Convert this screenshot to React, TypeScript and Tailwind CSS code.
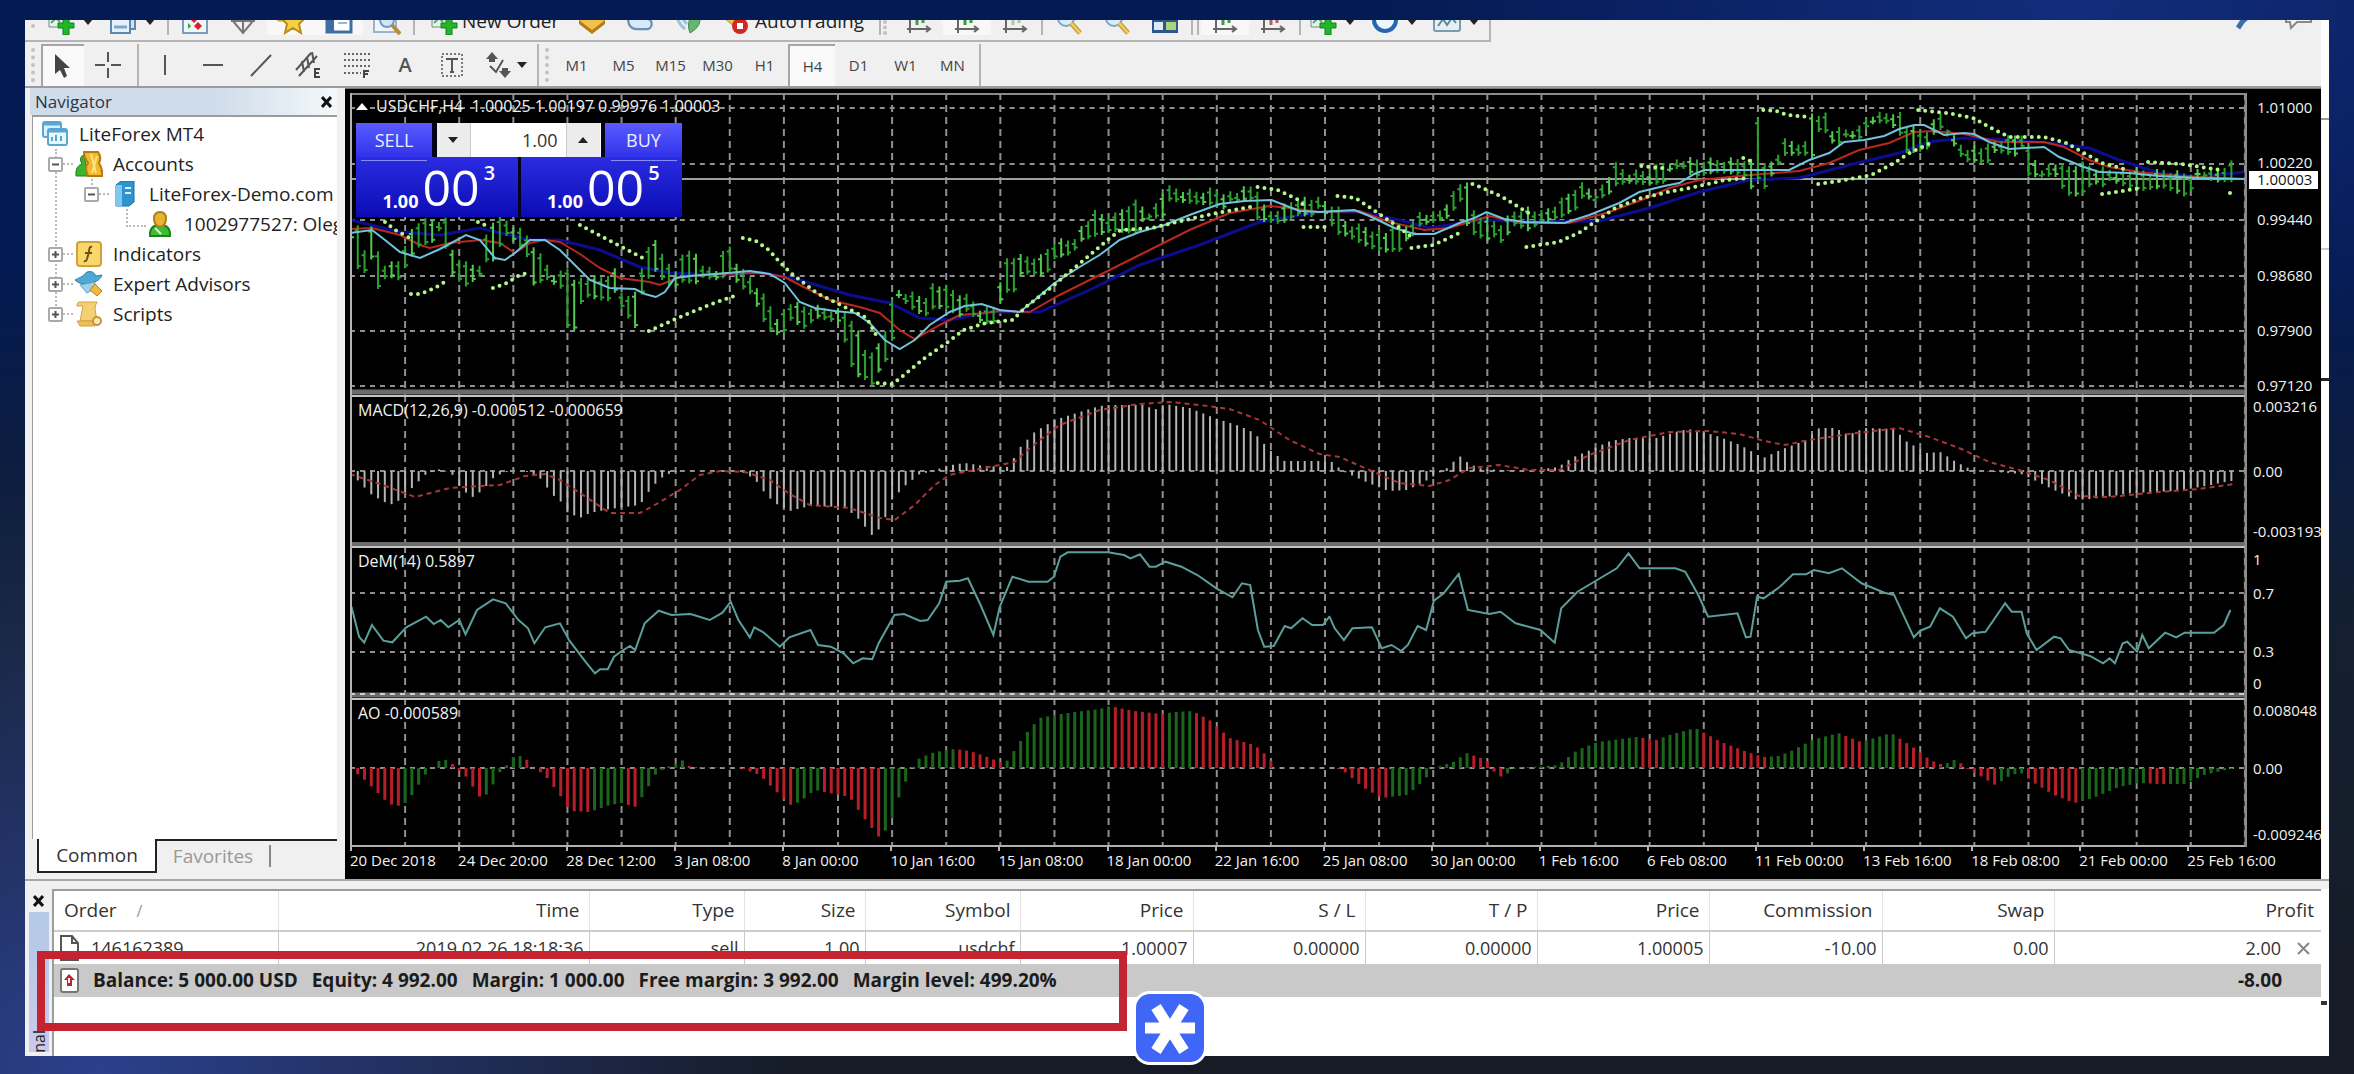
import React from 'react'
import { Cloud } from 'lucide-react'

const STEP = 54.14 / 8
const START = 351
const BARS = 279

// linear interpolation over a sorted list of points
function at(points: number[][], x: number, col = 1) {
    for (let i = 1; i < points.length; i++) {
        if (x <= points[i][0]) {
            const a = points[i - 1]
            const b = points[i]
            const t = (x - a[0]) / (b[0] - a[0] || 1)
            return a[col] + (b[col] - a[col]) * t
        }
    }
    return points[points.length - 1][col]
}

const pairs = (text: string) => text.trim().split(/\s+/).map((p) => p.split(',').map(Number))
const line = (text: string) => 'M' + text.trim().split(/\s+/).join(' L')

// x, high, low
const price = pairs(`
350,217,240 357,223,272 364,250,277 372,227,260 379,255,295 386,265,277 400,260,280 407,237,262 418,222,245 440,220,235
446,220,253 453,252,280 466,263,288 479,265,278 487,233,260 494,220,260 505,220,232 520,230,243 529,237,267 535,247,295
544,260,280 557,277,288 562,270,290 568,267,331 574,283,331 583,277,295 600,278,297 615,270,297 622,293,313 636,293,331
643,263,290 654,238,270 663,253,280 674,277,287 682,252,280 696,253,280 706,267,283 717,270,283 724,252,280 730,247,273
739,267,287 750,277,293 758,287,307 767,300,327 778,317,332 791,303,325 804,307,332 817,307,320 839,310,323 847,313,347
854,320,373 867,353,377 875,357,385 882,333,370 890,325,360 894,287,333 899,290,300 912,293,310 925,297,317 934,283,307
947,288,307 969,297,317 982,310,327 997,305,325 1002,270,295 1006,260,293 1014,257,292 1022,257,272 1041,257,273
1056,240,263 1072,240,257 1082,227,243 1095,213,237 1113,217,230 1134,200,230 1152,212,222 1163,193,220 1169,188,203
1195,192,203 1212,189,203 1234,193,207 1251,187,203 1258,190,222 1267,213,223 1282,207,223 1299,197,213 1321,200,213
1338,207,237 1347,223,238 1369,227,247 1384,233,250 1403,223,247 1412,227,243 1418,212,230 1438,213,223 1451,197,217
1460,183,197 1467,183,223 1475,213,233 1490,220,238 1502,223,247 1516,210,227 1527,207,233 1542,213,223 1559,203,217
1581,183,203 1598,193,203 1609,177,197 1616,165,187 1629,173,183 1650,170,183 1663,163,180 1682,160,170 1695,160,180
1718,160,172 1744,158,173 1751,160,183 1754,160,190 1758,109,184 1762,160,190 1766,167,193 1775,160,173 1786,140,157
1806,143,155 1812,113,160 1819,113,130 1826,113,130 1833,130,140 1850,130,142 1864,127,143 1868,115,127 1886,113,123
1899,110,130 1908,127,152 1926,133,147 1941,113,133 1948,127,137 1957,140,152 1965,147,163 1988,147,163 1996,142,150
2023,133,153 2029,147,180 2041,168,180 2056,163,177 2067,168,195 2081,163,195 2094,167,180 2116,170,187 2140,170,193
2151,173,190 2165,170,187 2185,173,193 2200,170,180 2216,172,185 2231,163,183`)

const fastMa = `350,233 372,230 385,240 400,252 420,258 440,249 466,235 480,240 495,258 505,260 515,253 530,240 545,240 560,250
575,265 590,280 610,288 635,289 645,294 656,297 665,292 675,278 690,276 715,274 750,271 770,274 785,283 800,302 815,308
835,311 855,313 870,323 885,340 900,349 915,340 930,325 950,312 965,306 982,304 1000,310 1020,312 1035,300 1055,283
1080,267 1100,255 1120,240 1140,232 1165,225 1190,215 1220,204 1245,201 1272,200 1300,211 1320,212 1355,210 1370,216
1395,228 1415,234 1435,234 1460,223 1475,218 1487,212 1505,219 1525,222 1565,223 1590,215 1620,203 1640,192 1665,186
1680,183 1695,174 1705,170 1790,170 1810,160 1830,153 1845,142 1865,140 1885,136 1900,129 1915,125 1925,125 1945,135
1965,133 1975,134 1990,142 2010,149 2045,147 2060,157 2085,167 2100,172 2130,173 2160,176 2200,178 2245,179`
const midMa = `350,229 372,228 400,235 420,245 430,248 450,243 480,240 500,243 515,253 530,243 545,240 560,242 580,254 600,268
620,278 650,282 660,285 680,277 720,274 760,273 785,277 800,285 830,300 860,307 880,313 900,330 915,339 940,325 960,315
985,313 1000,311 1030,312 1060,295 1100,275 1140,255 1190,230 1230,213 1270,206 1290,208 1320,212 1360,211 1390,222
1425,230 1450,228 1490,216 1520,223 1570,223 1610,212 1650,197 1670,188 1700,180 1740,176 1800,171 1830,163 1860,150
1890,143 1915,132 1935,131 1965,134 2000,142 2045,142 2065,147 2090,160 2110,167 2140,172 2180,176 2245,179`
const slowMa = `350,220 400,232 440,235 480,228 530,240 560,240 600,250 640,267 670,273 720,275 760,272 800,280 850,295
890,303 920,318 950,320 990,312 1040,312 1090,290 1140,265 1200,245 1260,222 1320,212 1360,212 1400,220 1430,228
1480,220 1540,222 1600,221 1650,208 1700,192 1750,180 1800,178 1850,165 1900,153 1930,142 1965,138 2010,140 2050,143
2090,148 2120,160 2160,173 2200,177 2245,172`

const sar = [
    '385,222 395,230 410,238',
    '411,294 420,294 435,288 448,280',
    '478,222 487,226',
    '493,288 505,284 520,275 528,273',
    '580,225 643,258',
    '649,331 678,318 709,305 737,295',
    '743,238 756,241 769,250 778,260 791,273 817,293 847,308 867,318 878,338',
    '878,383 893,384 908,372 925,358 947,343 964,330 986,323 1013,320 1026,307 1052,287 1082,262 1108,240 1121,230 1152,228 1186,220 1217,213 1251,207',
    '1258,187 1278,190 1299,200 1306,207',
    '1304,227 1332,227',
    '1338,196 1356,198 1377,212 1399,227 1412,237',
    '1412,248 1434,245 1460,233',
    '1473,184 1481,187 1503,197 1529,213',
    '1527,247 1559,242 1581,232 1594,223 1616,208 1642,198 1669,192 1695,187 1726,180 1749,178',
    '1642,166 1663,168',
    '1744,158 1753,162',
    '1764,110 1777,111 1788,115 1811,117',
    '1819,184 1846,180 1872,175 1895,163 1912,152 1934,142',
    '1919,110 1948,113 1974,118 1992,128 2010,137 2045,137 2067,143 2085,153 2103,163 2129,170',
    '2103,194 2143,188',
    '2149,162 2182,164 2222,170',
    '2231,193 2232,193',
]

const macd = pairs(`350,472 362,485 372,495 390,505 400,500 412,488 425,475 440,469 452,474 462,490 473,497 483,490 495,476
510,471 525,471 540,478 553,495 565,505 567,512 580,518 590,513 610,509 640,505 652,487 665,475 680,471 740,471 755,479
765,493 775,503 790,511 810,506 845,507 860,520 872,535 882,527 892,500 905,486 920,474 935,471 945,466 965,463 985,466
1010,467 1018,450 1035,432 1055,420 1080,412 1100,406 1110,405 1145,405 1155,410 1165,404 1190,408 1215,418 1240,426
1255,433 1270,450 1285,461 1320,461 1333,462 1343,471 1356,477 1369,483 1389,491 1408,490 1428,480 1441,472 1451,466
1459,455 1470,464 1483,469 1526,471 1559,467 1572,458 1591,450 1611,441 1630,438 1657,438 1676,432 1689,429 1715,435
1741,445 1764,458 1781,450 1807,440 1820,428 1836,428 1849,435 1866,428 1895,429 1908,442 1928,453 1941,452 1957,462
1973,470 2022,474 2035,480 2055,490 2078,500 2101,498 2133,493 2179,491 2212,485 2231,481`)
const macdSignal = `350,474 380,484 415,497 450,488 480,486 500,485 525,476 545,474 560,480 580,493 610,513 640,513 655,505
680,490 700,475 720,471 745,472 770,480 790,494 810,505 850,508 880,518 895,520 915,505 935,485 950,475 975,470 1000,465
1015,462 1030,448 1060,425 1100,410 1140,404 1170,402 1200,405 1230,409 1260,420 1290,440 1320,454 1340,457 1370,470
1400,483 1430,486 1450,480 1470,468 1500,465 1530,470 1560,470 1590,455 1630,440 1670,432 1710,431 1740,434 1765,441
1785,445 1810,440 1850,434 1900,428 1930,437 1960,448 1990,462 2020,470 2050,480 2080,496 2110,497 2160,492 2200,489 2235,484`

const toPath = (text: string, x0: number, sx: number) =>
    pairs(text).map(([x, y]) => `${(x0 + x / sx).toFixed(1)},${(390 + y / 3).toFixed(1)}`).join(' ')

const dem =
    toPath(`18,650 30,740 38,758 50,705 68,752 82,757 104,712 135,680 147,702 158,690 170,712 187,690 197,733 215,660 240,628
260,640 280,690 295,715 305,760 322,712 345,700 360,752 385,815 400,850 408,838 420,838 430,800 442,783 455,768 463,780
478,700 500,662 520,675 550,672 580,690 600,668 613,635 625,690 643,742 650,712 665,728 690,770 705,742 738,720 750,765
770,770 790,790 805,820 820,805 835,808 845,760 870,675 885,672 910,693 922,690 940,640 951,575 972,572 985,565 1005,645
1025,735 1035,650 1055,560 1080,575 1110,575 1120,560 1130,500 1142,487 1205,487 1230,495 1240,505 1255,493 1270,530
1280,530 1295,515 1320,530 1345,555 1375,595 1400,622 1415,580 1428,585 1440,720 1450,770 1465,768 1482,708 1492,715
1510,685 1525,705 1542,705 1552,680`, 340, 1.568) + ' ' +
    toPath(`0,680 8,715 22,750 35,715 65,712 80,775 95,765 110,783 120,765 135,708 148,720 160,632 175,610 198,552 212,660
245,672 262,665 285,700 323,720 345,758 355,655 380,605 410,570 440,535 458,490 475,535 530,535 545,545 565,615 580,680
625,670 638,742 645,740 655,620 665,625 690,590 710,553 730,553 742,540 765,550 785,535 815,580 850,608 865,615 895,742
905,722 920,710 935,655 955,680 975,745 985,730 1005,725 1035,640 1045,665 1060,665 1068,730 1083,780 1110,740 1120,745
1133,780 1165,798 1185,820 1195,805 1203,820 1215,760 1222,755 1237,785 1245,735 1255,775 1280,728 1297,742 1310,728
1355,728 1370,705 1380,660`, 1330, 1.531)

const ao = pairs(`350,768 365,780 385,800 395,807 405,803 412,795 425,775 432,768 440,760 450,760 455,768 465,775 475,790
482,800 490,790 500,772 508,764 515,755 525,757 532,767 545,775 560,795 570,811 590,812 610,805 622,803 635,807 645,793
655,775 665,768 680,762 685,759 690,767 740,768 760,775 775,790 790,805 800,802 815,790 840,795 850,797 862,815 880,838
890,825 900,795 912,768 920,758 935,752 955,749 970,751 985,756 1000,762 1005,764 1015,750 1025,735 1040,718 1055,715
1075,712 1100,709 1110,706 1135,711 1162,714 1175,712 1193,711 1210,720 1230,738 1255,745 1270,758 1275,768 1335,768
1343,770 1363,787 1382,798 1408,795 1425,780 1434,768 1454,762 1467,753 1487,760 1497,775 1503,777 1516,768 1559,765
1578,750 1598,742 1637,737 1657,740 1670,735 1696,728 1722,742 1748,752 1764,757 1780,756 1794,750 1813,740 1839,733
1862,742 1892,733 1918,750 1931,760 1944,765 1957,759 1967,768 1983,777 1996,785 2012,775 2022,773 2035,783 2055,795
2075,803 2094,798 2120,787 2140,783 2160,784 2186,784 2205,775 2231,769`)

const xs = Array.from({ length: BARS }, (_, i) => START + i * STEP)

function Plot({ top, height, rows, children }: { top: number; height: number; rows: number[]; children: React.ReactNode }) {
    return (
        <svg className="block h-full w-full" viewBox={`350 ${top} 1898 ${height}`} preserveAspectRatio="none" aria-hidden="true">
            {Array.from({ length: 35 }, (_, i) => (
                <line key={i} x1={START + (i + 1) * 54.14} x2={START + (i + 1) * 54.14} y1={top} y2={top + height} stroke="#8f8f8f" strokeWidth="2" strokeDasharray="7 5" />
            ))}
            {rows.map((y) => (
                <line key={y} x1="350" x2="2248" y1={y} y2={y} stroke="#8f8f8f" strokeWidth="2" strokeDasharray="5 5" />
            ))}
            {children}
            <path d={`M351 ${top} V${top + height}`} stroke="#b5b5b5" strokeWidth="2" />
            <path d={`M2247 ${top} V${top + height}`} stroke="#8c8c8c" strokeWidth="3" />
        </svg>
    )
}

function Axis({ top, height, labels, current }: { top: number; height: number; labels: [string, number][]; current?: [string, number] }) {
    return (
        <svg className="block shrink-0" width="74" height={height} viewBox={`2248 ${top} 74 ${height}`} fontFamily="Open Sans, Noto Sans, sans-serif" fontSize="15" fill="#f2f2f2">
            {labels.map(([label, y]) => (
                <text key={label} x={current ? 2258 : 2254} y={y + 5}>{label}</text>
            ))}
            {current && (
                <>
                    <rect x="2250" y={current[1] - 8} width="69" height="18" fill="#fff" />
                    <text x="2258" y={current[1] + 6} fill="#111">{current[0]}</text>
                </>
            )}
        </svg>
    )
}

const dates = [
    '20 Dec 2018', '24 Dec 20:00', '28 Dec 12:00', '3 Jan 08:00', '8 Jan 00:00', '10 Jan 16:00', '15 Jan 08:00', '18 Jan 00:00', '22 Jan 16:00',
    '25 Jan 08:00', '30 Jan 00:00', '1 Feb 16:00', '6 Feb 08:00', '11 Feb 00:00', '13 Feb 16:00', '18 Feb 08:00', '21 Feb 00:00', '25 Feb 16:00',
]

function Quote({ small, big, sup }: { small: string; big: string; sup: string }) {
    return (
        <div className="flex flex-1 justify-center gap-1 bg-linear-to-b from-[#2b2be2] to-[#0a0ab4] text-white">
            <span className="mt-[32px] pl-1 text-[18px] leading-[24px] font-bold">{small}</span>
            <span className="mt-[4px] text-[50px] leading-[52px]">{big}</span>
            <span className="mt-[4px] text-[20px] leading-[24px] font-semibold">{sup}</span>
        </div>
    )
}

function OneClick() {
    return (
        <div className="absolute top-[30px] left-[6px] h-[94px] w-[326px] bg-[#03031c]">
            <div className="flex h-[34px] justify-between">
                <button className="w-[76px] bg-linear-to-b from-[#5a5aff] to-[#3232ea] text-[18px] text-[#eef]">SELL</button>
                <div className="flex w-[164px] bg-white">
                    <button aria-label="Less volume" className="flex w-[33px] items-center justify-center bg-[#ececec]">
                        <Caret />
                    </button>
                    <input aria-label="Volume" defaultValue="1.00" className="w-[97px] border-x border-[#ccc] pr-2 text-right text-[18px] text-[#333]" />
                    <button aria-label="More volume" className="flex w-[33px] items-center justify-center bg-[#ececec]">
                        <Caret up />
                    </button>
                </div>
                <button className="w-[77px] bg-linear-to-b from-[#5a5aff] to-[#3232ea] text-[18px] text-[#eef]">BUY</button>
            </div>
            <div className="flex h-[60px] gap-[3px]">
                <Quote small="1.00" big="00" sup="3" />
                <Quote small="1.00" big="00" sup="5" />
            </div>
            <div className="absolute top-[37px] left-[5px] h-px w-[66px] bg-[#8a8aff]" />
            <div className="absolute top-[37px] right-[5px] h-px w-[66px] bg-[#8a8aff]" />
        </div>
    )
}

function Chart() {
    return (
        <section className="min-w-0 flex-1 overflow-hidden border-t border-[#777] bg-black pt-1 pl-[5px] text-[#f2f2f2]">
            <div className="flex h-[302px]">
                <div className="relative min-w-0 flex-1">
                    <Plot top={93} height={302} rows={[108, 164, 220, 276, 331, 386]}>
                        <path d="M350 179 H2248" stroke="#9aa39a" strokeWidth="2" />
                        <path d={line(slowMa)} fill="none" stroke="#0c0c8e" strokeWidth="3" />
                        <path d={line(midMa)} fill="none" stroke="#b8281e" strokeWidth="2" />
                        {xs.map((x, i) => {
                            const jitter = ((i * 37) % 11) - 5
                            const hi = at(price, x, 1) + jitter * 0.6
                            const lo = at(price, x, 2) + (((i * 53) % 13) - 6) * 0.7
                            return (
                                <path
                                    key={i}
                                    d={`M${x} ${hi} V${Math.max(lo, hi + 7)} M${x - 3} ${hi + 5} H${x} M${x} ${lo - 3} H${x + 3}`}
                                    stroke={i % 3 ? '#2aa230' : '#52c951'}
                                    strokeWidth="2"
                                />
                            )
                        })}
                        <path d={line(fastMa)} fill="none" stroke="#6fc3dc" strokeWidth="2" />
                        {sar.map((s) => (
                            <path key={s} d={line(s)} fill="none" stroke="#b4f58c" strokeWidth="4" strokeLinecap="round" strokeDasharray="0 7" />
                        ))}
                        <path d="M350 94 H2248" stroke="#8a8a8a" strokeWidth="2" />
                        <path d="M350 392 H2248" stroke="#6c6c6c" strokeWidth="5" />
                    </Plot>
                    <p className="absolute top-1 left-[6px] flex gap-2 text-[16px] leading-[18px] whitespace-pre">
                        <svg width="12" height="18" viewBox="0 0 12 18" aria-hidden="true"><path d="M6 6 L12 13 H0 Z" fill="#fff" /></svg>
                        USDCHF,H4  1.00025 1.00197 0.99976 1.00003
                    </p>
                    <OneClick />
                </div>
                <Axis
                    top={93}
                    height={302}
                    labels={[['1.01000', 108], ['1.00220', 163], ['0.99440', 220], ['0.98680', 276], ['0.97900', 331], ['0.97120', 386]]}
                    current={['1.00003', 179]}
                />
            </div>

            <div className="flex h-[151px]">
                <div className="relative min-w-0 flex-1">
                    <Plot top={395} height={151} rows={[471]}>
                        {xs.map((x, i) => (
                            <path key={i} d={`M${x} 471 V${at(macd, x)}`} stroke="#b4b4b4" strokeWidth="2" />
                        ))}
                        <path d={line(macdSignal)} fill="none" stroke="#a83538" strokeWidth="2" strokeDasharray="5 4" />
                        <path d="M350 396 H2248" stroke="#c4c4c4" strokeWidth="2" />
                        <path d="M350 544 H2248" stroke="#6c6c6c" strokeWidth="4" />
                    </Plot>
                    <p className="absolute top-[6px] left-[8px] text-[16px] leading-[18px]">MACD(12,26,9) -0.000512 -0.000659</p>
                </div>
                <Axis top={395} height={151} labels={[['0.003216', 407], ['0.00', 472], ['-0.003193', 532]]} />
            </div>

            <div className="flex h-[152px]">
                <div className="relative min-w-0 flex-1">
                    <Plot top={546} height={152} rows={[593, 652]}>
                        <path d={line(dem)} fill="none" stroke="#5a9f9b" strokeWidth="2" />
                        <path d="M350 547 H2248" stroke="#c4c4c4" strokeWidth="2" />
                        <path d="M350 695 H2248" stroke="#6c6c6c" strokeWidth="5" />
                        <path d="M350 694 H2248" stroke="#d0d0d0" strokeWidth="2" strokeDasharray="5 5" />
                    </Plot>
                    <p className="absolute top-[6px] left-[8px] text-[16px] leading-[18px]">DeM(14) 0.5897</p>
                </div>
                <Axis top={546} height={152} labels={[['1', 560], ['0.7', 594], ['0.3', 652], ['0', 684]]} />
            </div>

            <div className="flex h-[149px]">
                <div className="relative min-w-0 flex-1">
                    <Plot top={698} height={149} rows={[768]}>
                        {xs.map((x, i) => {
                            const y = at(ao, x)
                            return <path key={i} d={`M${x} 768 V${y}`} stroke={y > at(ao, x - STEP) ? '#b81e29' : '#1b661d'} strokeWidth="3" />
                        })}
                        <path d="M350 699 H2248" stroke="#c4c4c4" strokeWidth="2" />
                        <path d="M350 846 H2248" stroke="#b0b0b0" strokeWidth="2" />
                    </Plot>
                    <p className="absolute top-[6px] left-[8px] text-[16px] leading-[18px]">AO -0.000589</p>
                </div>
                <Axis top={698} height={149} labels={[['0.008048', 711], ['0.00', 769], ['-0.009246', 835]]} />
            </div>

            <div className="mr-[74px] flex h-8 text-[15px] leading-[18px]">
                {dates.map((d) => (
                    <span key={d} className="w-[calc(100%/17.55)] shrink-0 whitespace-nowrap">
                        <span className="block h-1 w-[2px] bg-[#b5b5b5]" />
                        {d}
                    </span>
                ))}
            </div>
        </section>
    )
}

/* ---------- toolbar ---------- */

const Caret = ({ up = false }: { up?: boolean }) => (
    <svg width="10" height="6" viewBox="0 0 10 6" aria-hidden="true">
        <path d={up ? 'M5 0 L10 6 H0 Z' : 'M0 0 H10 L5 6 Z'} fill="#222" />
    </svg>
)
const Sep = () => <span className="mx-[2px] w-[2px] self-stretch bg-[#b4b4b4]" />
const Grip = () => (
    <span className="flex w-4 justify-center self-stretch py-1">
        <span className="border-l-4 border-dotted border-[#c2c2c2]" />
    </span>
)
const Svg = ({ children }: { children: React.ReactNode }) => (
    <svg width="28" height="26" viewBox="0 0 28 26" fill="none" aria-hidden="true">{children}</svg>
)
const CenterSvg = ({ children }: { children: React.ReactNode }) => <span className="self-center"><Svg>{children}</Svg></span>
const GreenPlus = () => (
    <Svg>
        <path d="M2 2 H20 V18 H2 Z" fill="#e9f2ea" stroke="#6f8f76" />
        <path d="M4 14 L9 9 L13 13" stroke="#5a7" strokeWidth="2" />
        <path d="M16 8 H22 V14 H27 V19 H22 V26 H16 V19 H11 V14 H16 Z" fill="#22b42a" stroke="#0f8418" />
    </Svg>
)
const AxisIcon = ({ color = '#3c9c45' }: { color?: string }) => (
    <Svg>
        <path d="M5 4 V24 M2 20 H25 M21 17 L25 20 L21 23" stroke="#666" strokeWidth="2" />
        <path d="M12 6 V16 M18 4 V14" stroke={color} strokeWidth="3" />
    </Svg>
)
const ZoomIcon = () => (
    <Svg>
        <circle cx="11" cy="9" r="8" fill="#d8ecfa" stroke="#78a6cc" strokeWidth="2" />
        <path d="M16 14 L25 24" stroke="#c9a23c" strokeWidth="5" />
        <path d="M16 14 L25 24" stroke="#f0d269" strokeWidth="2" />
    </Svg>
)

function Tool({ label, active = false, children }: { label: string; active?: boolean; children: React.ReactNode }) {
    return (
        <button aria-label={label} className={active ? 'flex w-12 shrink-0 justify-center bg-[#f8f8f8]' : 'flex w-12 shrink-0 justify-center'}>
            {children}
        </button>
    )
}
function DropTool({ label, children }: { label: string; children: React.ReactNode }) {
    return (
        <button aria-label={label} className="flex w-[62px] shrink-0 items-center gap-2 pl-[6px]">
            {children}
            <Caret />
        </button>
    )
}

function MainToolbar() {
    return (
        <div className="mr-2 flex h-[22px] justify-between overflow-hidden bg-[#f0f0f0]">
            <div className="flex items-end border-r-2 border-b-2 border-[#b4b4b4] pb-[5px]">
                <Grip />
                <DropTool label="New chart"><GreenPlus /></DropTool>
                <DropTool label="Profiles">
                    <Svg>
                        <path d="M7 1 H26 V20 H7 Z" fill="#cfe2f3" stroke="#5f87ab" strokeWidth="2" />
                        <path d="M2 6 H21 V24 H2 Z" fill="#e6f0f9" stroke="#5f87ab" strokeWidth="2" />
                        <path d="M5 18 H18" stroke="#7fa6c8" strokeWidth="3" />
                    </Svg>
                </DropTool>
                <Sep />
                <Tool label="Market Watch">
                    <Svg>
                        <rect x="2" y="1" width="24" height="23" fill="#eef5fb" stroke="#7d9cba" strokeWidth="2" />
                        <path d="M13 6 L17 10 L13 14 L9 10 Z" fill="#d22" />
                        <path d="M17 13 L21 17 L17 21 L13 17 Z" fill="#d22" />
                        <path d="M7 14 L10 17 L7 20 Z" fill="#2a2" />
                    </Svg>
                </Tool>
                <Tool label="Data Window">
                    <Svg><path d="M2 12 H26 M14 0 V24 M4 12 L14 24 L24 12 M9 12 L14 5 L19 12" stroke="#777" strokeWidth="2" /></Svg>
                </Tool>
                <Tool label="Navigator" active>
                    <Svg>
                        <path d="M1 4 H10 V12 H1 Z" fill="#f2d277" stroke="#b98c1a" />
                        <path d="M16 1 L20 9 L27 10 L22 15 L24 24 L16 19 L8 24 L10 15 L5 10 L12 9 Z" fill="#f6cf45" stroke="#b98c1a" strokeWidth="2" />
                    </Svg>
                </Tool>
                <Tool label="Terminal" active>
                    <Svg>
                        <rect x="2" y="1" width="24" height="22" fill="#fff" stroke="#3f6ea5" strokeWidth="3" />
                        <path d="M6 1 V22" stroke="#3f6ea5" strokeWidth="6" />
                        <path d="M13 8 H22 M13 14 H22" stroke="#9db6d0" strokeWidth="2" />
                    </Svg>
                </Tool>
                <Tool label="Strategy Tester">
                    <Svg>
                        <rect x="1" y="1" width="22" height="22" fill="#eef5fb" stroke="#9bb4cc" strokeWidth="2" />
                        <circle cx="14" cy="11" r="7" fill="#cfe6f7" stroke="#6f9cc4" strokeWidth="2" />
                        <path d="M19 16 L27 25" stroke="#b98c3a" strokeWidth="4" />
                    </Svg>
                </Tool>
                <Sep />
                <button className="flex w-[151px] shrink-0 items-end gap-1 pl-[13px] text-[19px] leading-7 whitespace-nowrap text-[#222]">
                    <GreenPlus />New Order
                </button>
                <Tool label="MetaEditor">
                    <Svg>
                        <path d="M1 11 L14 0 L27 11 L14 22 Z" fill="#f0c24c" />
                        <path d="M1 11 V15 L14 25 L27 15 V11 L14 21 Z" fill="#b97a16" />
                    </Svg>
                </Tool>
                <Tool label="Cloud"><Cloud size={28} fill="#d7e8f6" color="#6c90b5" /></Tool>
                <Tool label="Signals">
                    <Svg>
                        <path d="M3 2 Q2 13 11 20 M8 3 Q8 11 13 15" stroke="#9fc3dc" strokeWidth="3" />
                        <path d="M26 1 V12 Q25 19 16 24 Q12 14 18 6 Z" fill="#68b56f" stroke="#3f8f57" />
                    </Svg>
                </Tool>
                <button className="flex w-[165px] shrink-0 items-end gap-[6px] pl-[9px] text-[19px] leading-7 whitespace-nowrap text-[#222]">
                    <Svg>
                        <path d="M1 7 L14 0 L27 7 L16 20 Z" fill="#efc54a" stroke="#b98c1a" />
                        <circle cx="19" cy="17" r="8" fill="#d02a20" />
                        <rect x="16" y="14" width="6" height="6" fill="#fff" />
                    </Svg>
                    AutoTrading
                </button>
                <Sep />
                <span className="w-3 self-stretch border-l-4 border-dotted border-[#c2c2c2]" />
                <Tool label="Bar Chart"><AxisIcon /></Tool>
                <Tool label="Candlesticks" active><AxisIcon color="#27a52e" /></Tool>
                <Tool label="Line Chart"><AxisIcon color="#a8c8a8" /></Tool>
                <Sep />
                <Tool label="Zoom In"><ZoomIcon /></Tool>
                <Tool label="Zoom Out"><ZoomIcon /></Tool>
                <Tool label="Tile Windows">
                    <Svg>
                        <rect x="1" y="0" width="26" height="24" fill="#2f568f" />
                        <path d="M3 13 H12 V21 H3 Z" fill="#dfeaf7" />
                        <path d="M15 3 H25 V10 H15 Z M15 13 H25 V21 H15 Z" fill="#a5d873" />
                    </Svg>
                </Tool>
                <Sep />
                <Sep />
                <Tool label="Auto Scroll" active><AxisIcon /></Tool>
                <Tool label="Chart Shift"><AxisIcon color="#a66" /></Tool>
                <Sep />
                <DropTool label="Indicators"><GreenPlus /></DropTool>
                <DropTool label="Periods">
                    <Svg><circle cx="14" cy="11" r="11" fill="#eef6fd" stroke="#2466b0" strokeWidth="4" /></Svg>
                </DropTool>
                <DropTool label="Templates">
                    <Svg>
                        <rect x="1" y="2" width="26" height="20" rx="2" fill="#e6f0f4" stroke="#7d9cab" strokeWidth="2" />
                        <path d="M5 17 L10 10 L14 16 L19 9 L23 14" stroke="#5c8b97" strokeWidth="2" />
                    </Svg>
                </DropTool>
            </div>
            <div className="flex items-end gap-6 pr-2 pb-3">
                <Svg><path d="M5 24 L9 18 L22 6" stroke="#3e6ea8" strokeWidth="5" /></Svg>
                <Svg><path d="M1 2 H26 V18 H12 L6 24 L5 18 H1 Z" fill="#f6f6f6" stroke="#888" strokeWidth="2" /></Svg>
            </div>
        </div>
    )
}

function LineToolbar() {
    return (
        <div className="mr-2 flex h-[46px] border-b-2 border-[#9b9b9b] bg-[#f0f0f0] pt-[2px]">
            <div className="flex items-stretch border-r-2 border-[#b4b4b4]">
                <Grip />
                <button aria-label="Cursor" className="flex w-[43px] items-center justify-center border-t-2 border-l-2 border-[#a5a5a5] bg-[#f9f9f9] pr-1">
                    <Svg><path d="M7 1 V21 L12 17 L16 25 L19 23 L16 15 L22 15 Z" fill="#444" /></Svg>
                </button>
                <Tool label="Crosshair"><CenterSvg><path d="M14 0 V10 M14 16 V26 M1 13 H11 M17 13 H27" stroke="#555" strokeWidth="2" /></CenterSvg></Tool>
                <span className="mr-[2px] ml-[5px] w-[2px] bg-[#b4b4b4]" />
                <Tool label="Vertical Line"><CenterSvg><path d="M14 3 V23" stroke="#555" strokeWidth="2" /></CenterSvg></Tool>
                <Tool label="Horizontal Line"><CenterSvg><path d="M4 13 H24" stroke="#555" strokeWidth="2" /></CenterSvg></Tool>
                <Tool label="Trendline"><CenterSvg><path d="M4 24 L24 3" stroke="#555" strokeWidth="2" /></CenterSvg></Tool>
                <Tool label="Equidistant Channel">
                    <CenterSvg>
                        <path d="M1 18 L16 1 M4 24 L22 4 M7 9 L9 20 M12 5 L14 16 M17 0 L19 11" stroke="#555" strokeWidth="2" />
                        <path d="M25 17 H20 V25 H25 M20 21 H24" stroke="#444" strokeWidth="2" />
                    </CenterSvg>
                </Tool>
                <Tool label="Fibonacci">
                    <CenterSvg>
                        <path d="M1 2 H27 M1 8 H27 M1 14 H27 M1 21 H18" stroke="#666" strokeWidth="2" strokeDasharray="2 2" />
                        <path d="M21 26 V19 H26 M21 22 H25" stroke="#444" strokeWidth="2" />
                    </CenterSvg>
                </Tool>
                <button aria-label="Text" className="w-12 text-[20px] font-semibold text-[#555]">A</button>
                <Tool label="Text Label">
                    <CenterSvg>
                        <rect x="3" y="2" width="20" height="22" stroke="#777" strokeWidth="2" strokeDasharray="2 2" />
                        <path d="M7 7 H19 M13 7 V20 M11 20 H15" stroke="#555" strokeWidth="2" />
                    </CenterSvg>
                </Tool>
                <button aria-label="Arrows" className="flex w-[58px] items-center gap-1 pl-2">
                    <Svg>
                        <path d="M7 0 L13 7 H1 Z M4 7 H10 V10 H4 Z M20 26 L26 19 H14 Z M17 16 H23 V19 H17 Z" fill="#555" />
                        <path d="M5 14 L11 20 L18 8" stroke="#555" strokeWidth="2" />
                    </Svg>
                    <Caret />
                </button>
                <Sep />
                <span className="my-1 mr-1 ml-1 border-l-4 border-dotted border-[#c2c2c2]" />
                {['M1', 'M5', 'M15', 'M30', 'H1', 'H4', 'D1', 'W1', 'MN'].map((t) => (
                    <button
                        key={t}
                        className={t === 'H4' ? 'w-[47px] border-t-2 border-l-2 border-[#a5a5a5] bg-[#f9f9f9] text-[15px] text-[#444]' : 'w-[47px] text-[15px] text-[#444]'}
                    >
                        {t}
                    </button>
                ))}
                <span className="w-[3px]" />
            </div>
        </div>
    )
}

/* ---------- navigator ---------- */

const icons: Record<string, React.ReactNode> = {
    root: (
        <Svg>
            <rect x="2" y="1" width="18" height="15" rx="2" fill="#d9effb" stroke="#5aa6d2" strokeWidth="2" />
            <rect x="7" y="8" width="19" height="16" rx="2" fill="#e8f6fd" stroke="#5aa6d2" strokeWidth="2" />
            <path d="M2 3 H20 M8 10 H26" stroke="#5aa6d2" strokeWidth="3" />
            <path d="M11 20 V16 M15 20 V14 M20 20 V15" stroke="#5aa6d2" strokeWidth="2" />
        </Svg>
    ),
    accounts: (
        <Svg>
            <path d="M1 25 Q0 15 7 13 Q3 6 9 4 L13 25 Z" fill="#3bb52e" stroke="#21801b" />
            <path d="M9 1 H23 Q27 6 24 12 Q28 18 27 25 H13 Q9 16 13 12 Q9 7 9 1 Z" fill="#f1b92b" stroke="#b87a12" strokeWidth="2" />
            <path d="M16 3 L21 22 M22 5 L17 22" stroke="#fbe58a" strokeWidth="2" />
        </Svg>
    ),
    server: (
        <Svg>
            <path d="M5 4 L10 0 H23 V21 L18 25 H5 Z" fill="#2f93cf" stroke="#1a6ea5" />
            <path d="M5 4 H11 V25 H5 Z" fill="#7cc8ee" />
            <path d="M14 7 H20 M14 12 H20" stroke="#d8f0fc" strokeWidth="2" />
        </Svg>
    ),
    user: (
        <Svg>
            <path d="M4 25 Q3 15 14 13 Q25 15 24 25 Z" fill="#3bbf2e" stroke="#21801b" strokeWidth="2" />
            <path d="M8 8 Q8 1 14 1 Q20 1 20 8 Q20 14 14 16 Q8 14 8 8 Z" fill="#e6b533" stroke="#b07f18" strokeWidth="2" />
            <path d="M9 17 L15 23" stroke="#d9f5cf" strokeWidth="2" />
        </Svg>
    ),
    indicator: (
        <Svg>
            <rect x="2" y="1" width="24" height="24" rx="3" fill="#f8d869" stroke="#d0a13a" strokeWidth="2" />
            <path d="M17 6 Q14 5 14 11 L12 18 Q11 21 9 20 M10 12 H17" stroke="#6d5313" strokeWidth="2" />
        </Svg>
    ),
    expert: (
        <Svg>
            <path d="M0 9 Q8 6 12 1 Q18 -1 21 5 L27 4 Q25 10 16 12 Q6 15 0 9 Z" fill="#4fa9d4" stroke="#2b7fae" />
            <path d="M5 14 L20 11 L19 18 L12 22 Z" fill="#9fd0e6" stroke="#5fa6c8" />
            <path d="M20 13 L27 20 L22 25 L15 19 Z" fill="#f0b944" stroke="#b98018" />
        </Svg>
    ),
    script: (
        <Svg>
            <path d="M2 3 Q3 0 7 1 H22 Q20 4 20 8 L22 20 H5 L8 5 H2 Z" fill="#f5cf73" stroke="#d3a044" />
            <path d="M2 20 H17 L20 25 H5 Z" fill="#eebe58" stroke="#d3a044" />
            <circle cx="22" cy="20" r="4" fill="#fbe9b8" stroke="#c89236" strokeWidth="2" />
        </Svg>
    ),
}

const Expander = ({ open = false }: { open?: boolean }) => (
    <svg width="15" height="15" viewBox="0 0 15 15" className="shrink-0" aria-hidden="true">
        <rect x="1" y="1" width="13" height="13" rx="1" fill="#fff" stroke="#aaa" strokeWidth="2" />
        <path d={open ? 'M4 7.5 H11' : 'M4 7.5 H11 M7.5 4 V11'} stroke="#555" strokeWidth="2" />
    </svg>
)

function Row({ icon, label, pad, state }: { icon: string; label: string; pad: string; state?: 'open' | 'closed' }) {
    return (
        <li className={`relative flex h-[30px] items-center whitespace-nowrap ${pad}`}>
            {state && (
                <>
                    <Expander open={state === 'open'} />
                    <span className="mr-[2px] w-[10px] border-t-2 border-dotted border-[#bbb]" />
                </>
            )}
            <span className="mr-[10px] shrink-0">{icons[icon]}</span>
            {label}
        </li>
    )
}

function Navigator() {
    return (
        <aside className="flex w-[320px] shrink-0 flex-col bg-[#f0f0f0] pr-2">
            <div className="ml-[5px] flex h-[27px] items-center justify-between bg-linear-to-r from-[#cfdcea] from-60% to-[#f4f8fb] px-[5px] text-[17px] text-[#2c3644]">
                <span>Navigator</span>
                <button aria-label="Close Navigator">
                    <svg width="11" height="12" viewBox="0 0 11 12" aria-hidden="true"><path d="M1 1 L10 11 M10 1 L1 11" stroke="#111" strokeWidth="3" /></svg>
                </button>
            </div>
            <div className="relative ml-[7px] flex-1 overflow-hidden border-t-2 border-l border-[#9c9c9c] bg-white pt-[2px] text-[19px] text-[#222]">
                <span className="absolute top-8 left-[22px] h-[168px] border-l-2 border-dotted border-[#bbb]" />
                <span className="absolute top-[62px] left-[58px] h-[14px] border-l-2 border-dotted border-[#bbb]" />
                <span className="absolute top-[92px] left-[93px] h-[18px] w-[20px] border-b-2 border-l-2 border-dotted border-[#bbb]" />
                <ul>
                    <Row icon="root" label="LiteForex MT4" pad="pl-[8px]" />
                    <Row icon="accounts" label="Accounts" pad="pl-[15px]" state="open" />
                    <Row icon="server" label="LiteForex-Demo.com" pad="pl-[51px]" state="open" />
                    <Row icon="user" label="1002977527: Oleg" pad="pl-[113px]" />
                    <Row icon="indicator" label="Indicators" pad="pl-[15px]" state="closed" />
                    <Row icon="expert" label="Expert Advisors" pad="pl-[15px]" state="closed" />
                    <Row icon="script" label="Scripts" pad="pl-[15px]" state="closed" />
                </ul>
            </div>
            <div className="flex h-10 pl-3 text-[19px]">
                <button className="h-[34px] w-[120px] border-x-2 border-b-2 border-[#222] bg-white text-[#333]">Common</button>
                <div className="flex flex-1 border-t-2 border-[#222] pt-1">
                    <button className="h-[22px] w-[114px] border-r-2 border-[#888] leading-[22px] text-[#999]">Favorites</button>
                </div>
            </div>
        </aside>
    )
}

/* ---------- terminal ---------- */

const columns: [string, string, string][] = [
    ['Order', 'w-[224px]', '146162389'],
    ['Time', 'w-[311px]', '2019.02.26 18:18:36'],
    ['Type', 'w-[155px]', 'sell'],
    ['Size', 'w-[121px]', '1.00'],
    ['Symbol', 'w-[155px]', 'usdchf'],
    ['Price', 'w-[173px]', '1.00007'],
    ['S / L', 'w-[172px]', '0.00000'],
    ['T / P', 'w-[172px]', '0.00000'],
    ['Price', 'w-[172px]', '1.00005'],
    ['Commission', 'w-[173px]', '-10.00'],
    ['Swap', 'w-[172px]', '0.00'],
    ['Profit', 'w-[269px]', '2.00'],
]

const summary = ['Balance: 5 000.00 USD', 'Equity: 4 992.00', 'Margin: 1 000.00', 'Free margin: 3 992.00', 'Margin level: 499.20%']

function Terminal() {
    return (
        <section className="relative flex flex-1 border-t-2 border-[#a8a8a8] bg-[#f0f0f0] pt-2">
            <div className="flex w-[27px] shrink-0 flex-col items-center">
                <button aria-label="Close Terminal" className="flex h-[23px] items-center">
                    <svg width="11" height="12" viewBox="0 0 11 12" aria-hidden="true"><path d="M1 1 L10 11 M10 1 L1 11" stroke="#111" strokeWidth="3" /></svg>
                </button>
                <div className="relative mb-1 w-5 flex-1 overflow-hidden bg-linear-to-b from-[#b3c9e6] to-[#c9c9ee]">
                    <span className="absolute top-[118px] left-0 rotate-180 text-[16px] leading-5 text-[#222] [writing-mode:vertical-rl]">Terminal</span>
                </div>
            </div>
            <div className="min-w-0 flex-1 border-t-2 border-l-2 border-[#9c9c9c] bg-white">
                <table className="w-full table-fixed border-collapse text-[18px] text-[#333]">
                    <thead>
                        <tr className="h-10 border-b-2 border-[#ccc] text-[19px]">
                            {columns.map(([name, width], i) => (
                                <th
                                    key={i}
                                    className={`${width} border-r border-[#e3e3e3] p-0 font-normal last:border-r-0 ${i === 0 ? 'pl-[10px] text-left' : 'pr-[9px] text-right'}`}
                                >
                                    {name}
                                    {i === 0 && <span className="pl-5 text-[16px] text-[#999]">/</span>}
                                </th>
                            ))}
                        </tr>
                    </thead>
                    <tbody>
                        <tr className="h-[33px]">
                            {columns.map(([, , value], i) => (
                                <td key={i} className={`border-r border-[#c9c9c9] p-0 last:border-r-0 ${i === 0 ? 'text-left' : 'pr-[5px] text-right'}`}>
                                    {i === 0 ? (
                                        <span className="flex items-center gap-3 pl-[6px]">
                                            <svg width="19" height="26" viewBox="0 0 19 26" aria-hidden="true">
                                                <path d="M1 1 H12 L18 8 V25 H1 Z M12 1 V8 H18" fill="#fff" stroke="#555" strokeWidth="2" />
                                            </svg>
                                            {value}
                                        </span>
                                    ) : i === 11 ? (
                                        <span className="flex items-center justify-end gap-4 pr-2">
                                            {value}
                                            <button aria-label="Close order">
                                                <svg width="13" height="13" viewBox="0 0 13 13" aria-hidden="true"><path d="M1 1 L12 12 M12 1 L1 12" stroke="#888" strokeWidth="2" /></svg>
                                            </button>
                                        </span>
                                    ) : (
                                        value
                                    )}
                                </td>
                            ))}
                        </tr>
                        <tr className="h-[33px] bg-[#c9c9c9] text-[19px] font-bold text-[#1c1c1c]">
                            <td colSpan={11} className="p-0">
                                <span className="flex items-center gap-[14px] pl-[6px]">
                                    <svg width="19" height="25" viewBox="0 0 19 25" aria-hidden="true">
                                        <rect x="1" y="1" width="17" height="23" rx="2" fill="#fff" stroke="#777" strokeWidth="2" />
                                        <path d="M9 6 L15 12 H12 V18 H7 V12 H4 Z" fill="#c4222b" />
                                        <path d="M9 10 V15" stroke="#fff" strokeWidth="2" />
                                    </svg>
                                    {summary.map((s) => <span key={s}>{s}</span>)}
                                </span>
                            </td>
                            <td className="p-0 pr-[41px] text-right">-8.00</td>
                        </tr>
                    </tbody>
                </table>
            </div>
            <div className="w-2 bg-white pt-[112px]"><div className="h-1 w-[6px] bg-[#333]" /></div>

            {/* account summary highlight */}
            <div className="pointer-events-none absolute top-[70px] left-3 h-20 w-[1090px] border-8 border-[#c42330]" />

            <svg className="absolute top-[110px] left-[1108px]" width="74" height="74" viewBox="0 0 74 74" aria-hidden="true">
                <rect width="74" height="74" rx="17" fill="#fff" />
                <rect x="3" y="3" width="68" height="68" rx="14" fill="#4066f8" />
                <path d="M12 37 H62 M23 16 L51 60 M51 16 L23 60" stroke="#fff" strokeWidth="11" />
            </svg>
        </section>
    )
}

export default function App() {
    return (
        <main className="flex min-h-screen flex-col bg-[radial-gradient(700px_600px_at_100px_100%,#2b408c,transparent),radial-gradient(700px_360px_at_88%_0,#122d7c,transparent),linear-gradient(#041a52_25%,#14202f_60%,#161b26)] px-[25px] pt-5 pb-[18px] font-['Open_Sans','Noto_Sans',sans-serif]">
            <div className="flex flex-1 flex-col bg-white">
                <MainToolbar />
                <LineToolbar />
                <div className="flex h-[791px]">
                    <Navigator />
                    <Chart />
                    <div className="flex w-2 flex-col gap-[128px] bg-white pt-[30px]">
                        <span className="h-[2px] bg-[#999]" />
                        <span className="h-[2px] bg-[#ccc]" />
                        <span className="h-[3px] bg-[#222]" />
                    </div>
                </div>
                <Terminal />
            </div>
        </main>
    )
}
